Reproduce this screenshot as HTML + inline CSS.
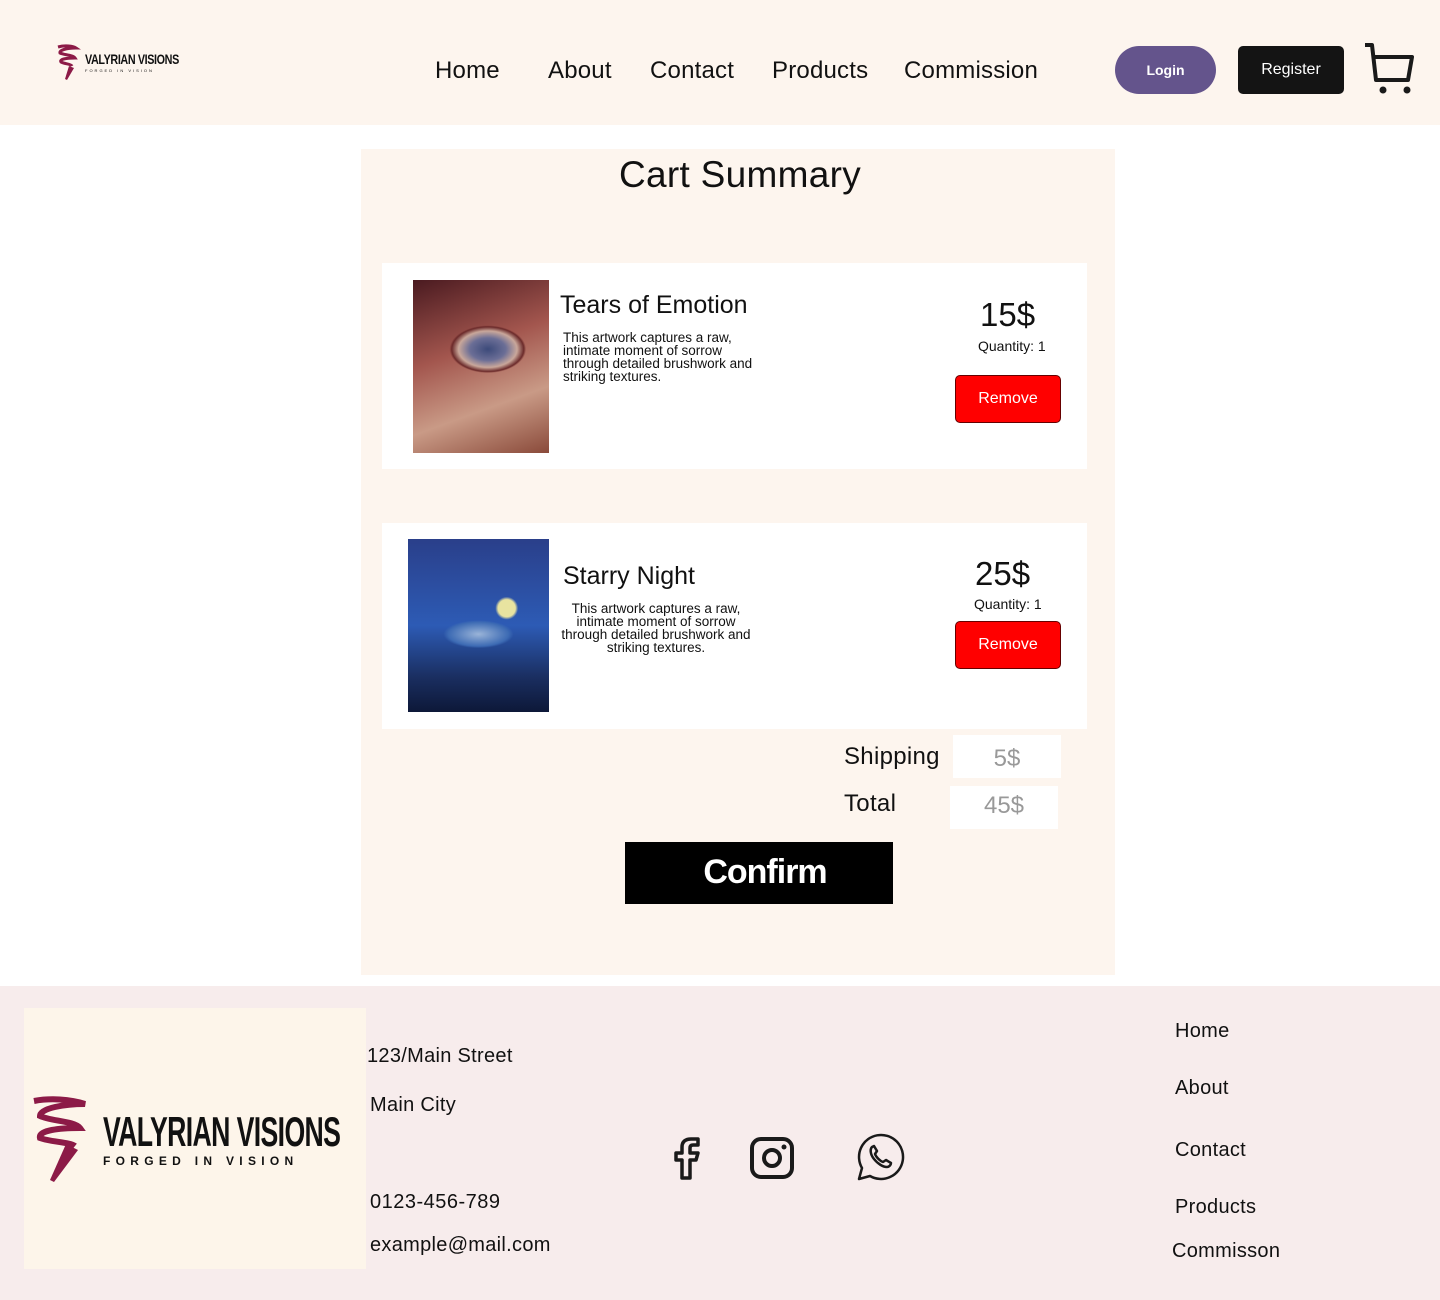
<!DOCTYPE html>
<html><head><meta charset="utf-8"><style>
*{margin:0;padding:0;box-sizing:border-box}
body{width:1440px;height:1300px;background:#fff;font-family:"Liberation Sans",sans-serif;color:#111;position:relative;overflow:hidden}
.a{position:absolute}
.t{position:absolute;white-space:nowrap}
</style></head><body>
<div class="a" style="left:0;top:0;width:1440px;height:125px;background:#fdf5ee"></div>
<svg class="a" style="left:55px;top:44px" width="26" height="38" viewBox="0 0 26 38"><path d="M3 3 C10 1 18 2 21 4 C12 4 4 6 5 9 C9 11 18 11 20 14 C12 14 4 15 6 18 C10 20 16 20 17 22" stroke="#8c1a47" stroke-width="3" fill="none"/><path d="M14 22 L19 24 L12 36 L10 35Z" fill="#8c1a47"/></svg>
<div class="t" style="left:85px;top:51px;font-size:14px;font-weight:bold;letter-spacing:-0.5px;transform:scaleX(.77);transform-origin:left">VALYRIAN VISIONS</div>
<div class="t" style="left:85px;top:68px;font-size:4px;letter-spacing:2px">FORGED IN VISION</div>
<div class="t" style="left:435px;top:57px;font-size:24px;letter-spacing:.2px">Home</div>
<div class="t" style="left:548px;top:57px;font-size:24px;letter-spacing:.2px">About</div>
<div class="t" style="left:650px;top:57px;font-size:24px;letter-spacing:.2px">Contact</div>
<div class="t" style="left:772px;top:57px;font-size:24px;letter-spacing:.2px">Products</div>
<div class="t" style="left:904px;top:57px;font-size:24px;letter-spacing:.2px">Commission</div>
<div class="a" style="left:1115px;top:46px;width:101px;height:48px;border-radius:24px;background:#64548c;color:#fff;font-size:14px;font-weight:bold;text-align:center;line-height:48px">Login</div>
<div class="a" style="left:1238px;top:46px;width:106px;height:48px;border-radius:5px;background:#141414;color:#fff;font-size:16px;text-align:center;line-height:48px">Register</div>
<svg class="a" style="left:1362px;top:42px" width="54" height="54" viewBox="0 0 54 54"><path d="M3 3 H10 L14 38 H46 L50 15 H12" stroke="#1a1a1a" stroke-width="4" fill="none" stroke-linejoin="round"/><circle cx="21" cy="48" r="3.5" fill="#1a1a1a"/><circle cx="45" cy="48" r="3.5" fill="#1a1a1a"/></svg>
<div class="a" style="left:361px;top:149px;width:754px;height:826px;background:#fdf5ee"></div>
<div class="t" style="left:619px;top:154px;font-size:37px;letter-spacing:.3px">Cart Summary</div>
<div class="a" style="left:382px;top:263px;width:705px;height:206px;background:#fff"></div>
<div class="a" style="left:413px;top:280px;width:136px;height:173px;background:radial-gradient(ellipse 45px 28px at 55% 40%,#3c4a7a 0,#6b6e96 40%,#c9a79a 65%,#6b2a2a 80%,transparent 85%),linear-gradient(160deg,#4a1a20,#a3564e 40%,#c99a86 70%,#8a4a3a)"></div>
<div class="t" style="left:560px;top:291px;font-size:25px">Tears of Emotion</div>
<div class="t" style="left:563px;top:331px;font-size:13.5px;line-height:13px">This artwork captures a raw,<br>intimate moment of sorrow<br>through detailed brushwork and<br>striking textures.</div>
<div class="t" style="left:980px;top:296px;font-size:33px">15$</div>
<div class="t" style="left:978px;top:338px;font-size:14px">Quantity: 1</div>
<div class="a" style="left:955px;top:375px;width:106px;height:48px;border-radius:5px;background:#f00;border:1px solid #600;color:#fff;font-size:16px;text-align:center;line-height:46px">Remove</div>
<div class="a" style="left:382px;top:523px;width:705px;height:206px;background:#fff"></div>
<div class="a" style="left:408px;top:539px;width:141px;height:173px;background:radial-gradient(circle at 70% 40%,#e8e3a0 0,#e8e3a0 6%,transparent 8%),radial-gradient(ellipse 50px 20px at 50% 55%,#9ab4d8 0,#3d6bb4 60%,transparent 70%),linear-gradient(180deg,#2a3f8a,#2d5bb5 50%,#1a2e60 80%,#0d1838)"></div>
<div class="t" style="left:563px;top:562px;font-size:25px">Starry Night</div>
<div class="t" style="left:556px;top:602px;width:200px;font-size:13.5px;line-height:13px;text-align:center">This artwork captures a raw,<br>intimate moment of sorrow<br>through detailed brushwork and<br>striking textures.</div>
<div class="t" style="left:975px;top:555px;font-size:33px">25$</div>
<div class="t" style="left:974px;top:596px;font-size:14px">Quantity: 1</div>
<div class="a" style="left:955px;top:621px;width:106px;height:48px;border-radius:5px;background:#f00;border:1px solid #600;color:#fff;font-size:16px;text-align:center;line-height:46px">Remove</div>
<div class="t" style="left:844px;top:743px;font-size:24px;letter-spacing:.3px">Shipping</div>
<div class="a" style="left:953px;top:735px;width:108px;height:43px;background:#fff;color:#999;font-size:24px;text-align:center;line-height:48px">5$</div>
<div class="t" style="left:844px;top:790px;font-size:24px;letter-spacing:.3px">Total</div>
<div class="a" style="left:950px;top:786px;width:108px;height:43px;background:#fff;color:#999;font-size:24px;text-align:center;line-height:40px">45$</div>
<div class="a" style="left:625px;top:842px;width:268px;height:62px;background:#000;color:#fff;font-size:34px;font-weight:bold;text-align:center;line-height:60px;letter-spacing:-1px;padding-left:12px">Confirm</div>
<div class="a" style="left:0;top:986px;width:1440px;height:314px;background:#f7ecec"></div>
<div class="a" style="left:24px;top:1008px;width:342px;height:261px;background:#fdf5ea"></div>
<svg class="a" style="left:30px;top:1096px" width="60" height="90" viewBox="0 0 60 90"><path d="M4 5 C20 2 40 3 55 8 C35 8 10 12 10 20 C20 25 45 25 50 32 C30 32 8 34 10 42 C20 46 40 46 45 50" stroke="#8c1a47" stroke-width="6" fill="none"/><path d="M36 48 L48 54 L24 86 L20 84Z" fill="#8c1a47"/></svg>
<div class="t" style="left:103px;top:1108px;font-size:42px;font-weight:bold;letter-spacing:-1px;transform:scaleX(.635);transform-origin:left">VALYRIAN VISIONS</div>
<div class="t" style="left:103px;top:1154px;font-size:12px;font-weight:bold;letter-spacing:5.3px">FORGED IN VISION</div>
<div class="t" style="left:367px;top:1045px;font-size:20px;letter-spacing:.3px">123/Main Street</div>
<div class="t" style="left:370px;top:1094px;font-size:20px;letter-spacing:.3px">Main City</div>
<div class="t" style="left:370px;top:1191px;font-size:20px;letter-spacing:.5px">0123-456-789</div>
<div class="t" style="left:370px;top:1234px;font-size:20px;letter-spacing:.3px">example@mail.com</div>
<svg class="a" style="left:672px;top:1136px" width="32" height="44" viewBox="0 0 32 44"><path d="M10 42 V24 H4 V17 H10 V11 C10 5 14 3 19 3 H26 V9 H21 C19 9 18 10 18 12 V17 H26 L24 24 H18 V42 Z" stroke="#1a1a1a" stroke-width="3.5" fill="none" stroke-linejoin="round"/></svg>
<svg class="a" style="left:749px;top:1136px" width="46" height="44" viewBox="0 0 46 44"><rect x="3" y="3" width="40" height="38" rx="9" stroke="#1a1a1a" stroke-width="4" fill="none"/><circle cx="23" cy="22" r="8" stroke="#1a1a1a" stroke-width="4" fill="none"/><circle cx="35" cy="11" r="2.5" fill="#1a1a1a"/></svg>
<svg class="a" style="left:855px;top:1132px" width="50" height="50" viewBox="0 0 50 50"><path d="M4 47 L7 36 A22 22 0 1 1 15 44 Z" stroke="#1a1a1a" stroke-width="2.5" fill="none" stroke-linejoin="round"/><path d="M17 15 C15 17 15 22 19 27 C23 32 28 35 32 35 C34 35 36 33 36 31 L31 28 L28 30 C25 29 21 25 20 22 L22 19 L19 14 Z" stroke="#1a1a1a" stroke-width="2.5" fill="none" stroke-linejoin="round"/></svg>
<div class="t" style="left:1175px;top:1020px;font-size:20px;letter-spacing:.3px">Home</div>
<div class="t" style="left:1175px;top:1077px;font-size:20px;letter-spacing:.3px">About</div>
<div class="t" style="left:1175px;top:1139px;font-size:20px;letter-spacing:.3px">Contact</div>
<div class="t" style="left:1175px;top:1196px;font-size:20px;letter-spacing:.3px">Products</div>
<div class="t" style="left:1172px;top:1240px;font-size:20px;letter-spacing:.3px">Commisson</div>
</body></html>
